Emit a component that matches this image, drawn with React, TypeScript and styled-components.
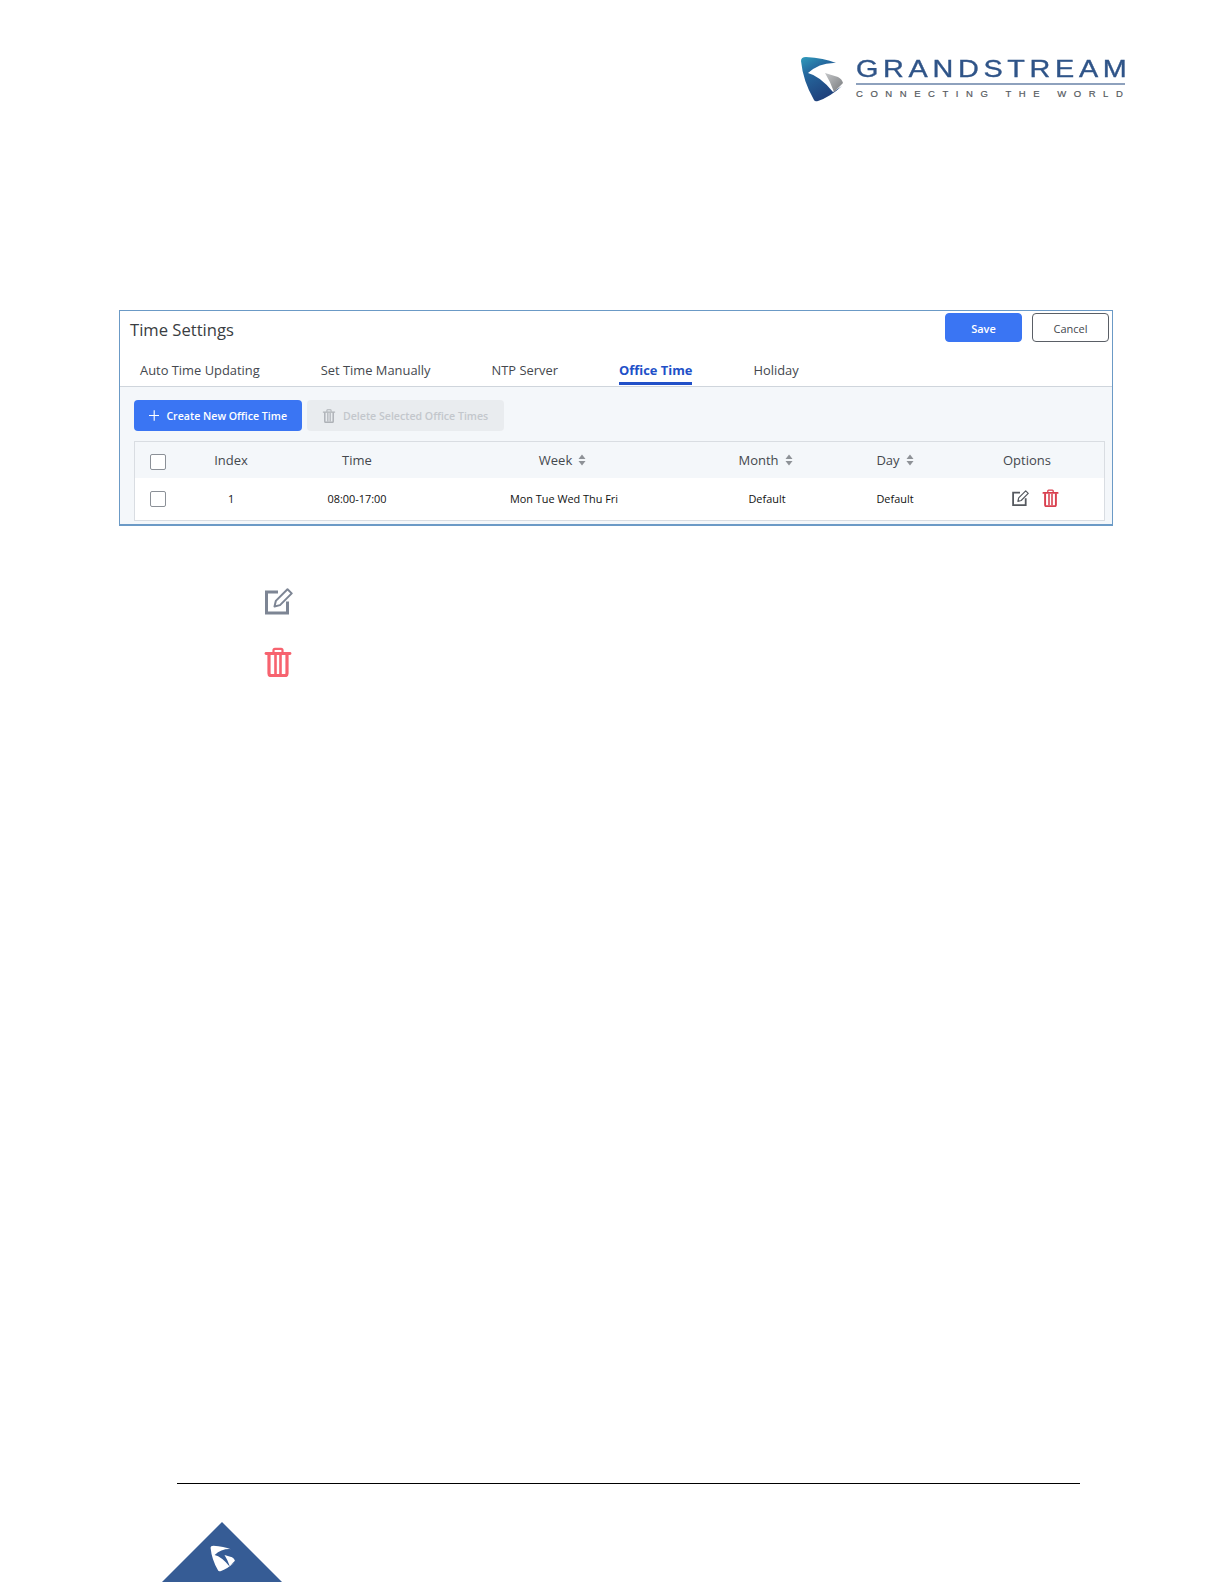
import React from "react";
import styled, { createGlobalStyle } from "styled-components";

const Global = createGlobalStyle`
  html, body { margin: 0; padding: 0; background: #fff; }
  body { font-family: "Open Sans", "Noto Sans", sans-serif; }
`;

const Page = styled.div`
  width: 1224px;
  height: 1584px;
  box-sizing: border-box;
  overflow: hidden;
  display: flex;
  flex-direction: column;
  background: #fff;
`;

const Header = styled.header`
  display: flex;
  justify-content: flex-end;
  align-items: flex-start;
  gap: 10px;
  height: 310px;
  box-sizing: border-box;
  padding: 55px 99px 0 0;
`;

const Mark = styled.svg`
  width: 46px;
  height: 48px;
  flex: none;
  filter: blur(0.4px);
`;

const Wordmark = styled.div`
  display: flex;
  flex-direction: column;
  width: 269px;
  padding-top: 1px;
`;

const BrandName = styled.div`
  font-family: "Liberation Sans", Arial, sans-serif;
  font-size: 24px;
  line-height: 25px;
  height: 25px;
  letter-spacing: 3.9px;
  color: #2f5488;
  -webkit-text-stroke: 0.35px #2f5488;
  white-space: nowrap;
  transform-origin: left center;
  transform: scaleX(1.2);
`;

const BrandRule = styled.div`
  height: 2px;
  background: #8ea1bd;
  margin-top: 2px;
`;

const Tagline = styled.div`
  font-family: "Liberation Sans", Arial, sans-serif;
  font-size: 9.5px;
  line-height: 12px;
  margin-top: 3px;
  letter-spacing: 7.55px;
  color: #565a60;
  -webkit-text-stroke: 0.2px #565a60;
  white-space: nowrap;
`;

const Panel = styled.section`
  margin-left: 119px;
  width: 994px;
  height: 216px;
  box-sizing: border-box;
  border: 1px solid #6b9ac6;
  border-bottom-width: 2px;
  display: flex;
  flex-direction: column;
  background: #fff;
`;

const TitleBar = styled.div`
  display: flex;
  align-items: flex-start;
  justify-content: space-between;
  padding: 2px 3px 0 10px;
`;

const Title = styled.h1`
  margin: 0;
  font-size: 16.6px;
  font-weight: 400;
  line-height: 34px;
  color: #3a3d42;
`;

const Actions = styled.div`
  display: flex;
  gap: 10px;
`;

const ActionButton = styled.button<{ $primary?: boolean }>`
  width: 77px;
  height: 29px;
  box-sizing: border-box;
  border-radius: 4px;
  border: 1px solid ${(p) => (p.$primary ? "#3a75f3" : "#5a5f66")};
  background: ${(p) => (p.$primary ? "#3a75f3" : "#fff")};
  color: ${(p) => (p.$primary ? "#fff" : "#44484e")};
  font: ${(p) => (p.$primary ? 600 : 400)} 11px "Open Sans", sans-serif;
  padding: 2px 0 0;
`;

const Tabs = styled.nav`
  display: flex;
  gap: 61px;
  padding: 9px 0 0 20px;
  height: 44px;
  box-sizing: border-box;
  border-bottom: 1px solid #cfd5dc;
`;

const Tab = styled.div<{ $active?: boolean }>`
  font-size: 12.9px;
  line-height: 28px;
  height: 29px;
  box-sizing: border-box;
  white-space: nowrap;
  font-weight: ${(p) => (p.$active ? 700 : 400)};
  color: ${(p) => (p.$active ? "#2150c8" : "#44484e")};
  border-bottom: ${(p) => (p.$active ? "3px solid #2150c8" : "none")};
`;

const Body = styled.div`
  flex: 1;
  background: #f4f7fa;
  padding: 13px 7px 3px 14px;
  display: flex;
  flex-direction: column;
  gap: 10px;
`;

const Toolbar = styled.div`
  display: flex;
  gap: 5px;
`;

const ToolButton = styled.button<{ $disabled?: boolean }>`
  height: 31px;
  box-sizing: border-box;
  display: flex;
  align-items: center;
  border-radius: 4px;
  border: none;
  padding: 0 15px;
  gap: 7px;
  font: 600 10.6px "Open Sans", sans-serif;
  white-space: nowrap;
  background: ${(p) => (p.$disabled ? "#e9ecef" : "#3a75f3")};
  color: ${(p) => (p.$disabled ? "#c3c7cc" : "#fff")};
  width: ${(p) => (p.$disabled ? "197px" : "168px")};
`;

const Table = styled.div`
  border: 1px solid #d9dde2;
  background: #fff;
  display: flex;
  flex-direction: column;
`;

const Row = styled.div<{ $head?: boolean }>`
  display: grid;
  grid-template-columns: 55px 82px 170px 244px 162px 94px 162px;
  align-items: center;
  height: ${(p) => (p.$head ? "36px" : "42px")};
  background: ${(p) => (p.$head ? "#f4f7fa" : "#fff")};
`;

const HeadCell = styled.div<{ $sort?: boolean; $shift?: number }>`
  display: flex;
  justify-content: center;
  align-items: center;
  gap: 6px;
  font-size: 13px;
  color: #44484e;
  padding-right: ${(p) => (p.$sort ? "3px" : "0")};
  padding-left: ${(p) => (p.$shift ? `${p.$shift}px` : "0")};
`;

const Cell = styled.div`
  display: flex;
  justify-content: center;
  align-items: center;
  padding-bottom: 2px;
  font-size: 10.9px;
  font-weight: 500;
  color: #111;
  white-space: nowrap;
`;

const OptionsCell = styled.div`
  display: flex;
  justify-content: center;
  align-items: center;
  gap: 13px;
  padding: 0 0 3px 24px;
`;

const CheckCell = styled.div<{ $head?: boolean }>`
  padding: ${(p) => (p.$head ? "3px" : "0")} 0 0 15px;
  display: flex;
`;

const Check = styled.span`
  width: 16px;
  height: 16px;
  box-sizing: border-box;
  border: 1px solid #8b9097;
  border-radius: 2px;
  background: #fff;
`;

const Legend = styled.div`
  display: flex;
  flex-direction: column;
  align-items: flex-start;
  gap: 31px;
  padding: 60px 0 0 263px;
`;

const LegendIcon = styled.svg`
  width: 30px;
  height: 30px;
  display: block;
  filter: blur(0.5px);
`;

const Footer = styled.footer`
  margin-top: auto;
  padding-bottom: 2px;
  display: flex;
  flex-direction: column;
  align-items: flex-start;
`;

const FootRule = styled.div`
  margin-left: 177px;
  width: 903px;
  height: 1px;
  background: #000;
`;

const FootMark = styled.svg`
  margin: 38px 0 0 162px;
  width: 120px;
  height: 60px;
  display: block;
`;

const Sort = () => (
  <svg width="8" height="12" viewBox="0 0 8 12">
    <path d="M4 .5 7.500 5H.500zM4 11.500.500 7h7z" fill="#8e9297" />
  </svg>
);

const SWOOSH = "M1 6Q1 2 6 2Q24 3 36 8Q20 7 8 18Q20 21 33 37L42 31Q30 42 18 46Q15 47 14 45Q3 26 1 6Z";
const WING = "M25 18L38 22Q42 24 43 28L34 37Q30 26 25 18Z";

const EditShape = ({ color }: { color: string }) => (
  <>
    <path d="M15 6H3.500v21h21V15.500" stroke={color} strokeWidth="3" fill="none" />
    <path d="M11.500 20.500l1.300-5.600L24.500 3.200l4.200 4.200L17 19.100z" stroke={color} strokeWidth="2" strokeLinejoin="round" fill="none" />
  </>
);

const TrashShape = ({ color }: { color: string }) => (
  <>
    <path d="M2 6.500h24" stroke={color} strokeWidth="2.800" strokeLinecap="round" />
    <path d="M9.500 6V3.200q0-1.400 1.400-1.400h6.200q1.400 0 1.400 1.400V6" stroke={color} strokeWidth="2.200" fill="none" />
    <path d="M5 7v19.600q0 2 2 2h14q2 0 2-2V7" stroke={color} strokeWidth="3.200" fill="none" />
    <path d="M11.500 8v19M16.500 8v19" stroke={color} strokeWidth="2.600" />
  </>
);

export default function App() {
  return (
    <Page>
      <Global />
      <Header>
        <Mark viewBox="0 0 46 48">
          <defs>
            <linearGradient id="gs" x1="0" y1="0" x2="0.5" y2="1">
              <stop offset="0" stopColor="#2f9cbc" />
              <stop offset="0.35" stopColor="#25689e" />
              <stop offset="1" stopColor="#1f3f7a" />
            </linearGradient>
            <linearGradient id="gw" x1="0" y1="0" x2="1" y2="1">
              <stop offset="0" stopColor="#c4c6c8" />
              <stop offset="1" stopColor="#77797c" />
            </linearGradient>
          </defs>
          <path d={SWOOSH} fill="url(#gs)" />
          <path d={WING} fill="url(#gw)" />
        </Mark>
        <Wordmark>
          <BrandName>GRANDSTREAM</BrandName>
          <BrandRule />
          <Tagline>CONNECTING THE WORLD</Tagline>
        </Wordmark>
      </Header>
      <Panel>
        <TitleBar>
          <Title>Time Settings</Title>
          <Actions>
            <ActionButton $primary>Save</ActionButton>
            <ActionButton>Cancel</ActionButton>
          </Actions>
        </TitleBar>
        <Tabs>
          <Tab>Auto Time Updating</Tab>
          <Tab>Set Time Manually</Tab>
          <Tab>NTP Server</Tab>
          <Tab $active>Office Time</Tab>
          <Tab>Holiday</Tab>
        </Tabs>
        <Body>
          <Toolbar>
            <ToolButton>
              <svg width="11" height="11" viewBox="0 0 11 11">
                <path d="M5.500 0v11M0 5.500h11" stroke="#fff" strokeWidth="1.200" />
              </svg>
              Create New Office Time
            </ToolButton>
            <ToolButton $disabled>
              <svg width="14" height="14" viewBox="0 0 28 30">
                <TrashShape color="#aeb2b7" />
              </svg>
              Delete Selected Office Times
            </ToolButton>
          </Toolbar>
          <Table>
            <Row $head>
              <CheckCell $head><Check /></CheckCell>
              <HeadCell>Index</HeadCell>
              <HeadCell>Time</HeadCell>
              <HeadCell $sort>Week <Sort /></HeadCell>
              <HeadCell $sort>Month <Sort /></HeadCell>
              <HeadCell>Day <Sort /></HeadCell>
              <HeadCell $shift={8}>Options</HeadCell>
            </Row>
            <Row>
              <CheckCell><Check /></CheckCell>
              <Cell>1</Cell>
              <Cell>08:00-17:00</Cell>
              <Cell>Mon Tue Wed Thu Fri</Cell>
              <Cell>Default</Cell>
              <Cell>Default</Cell>
              <OptionsCell>
                <svg width="18" height="18" viewBox="0 0 30 30">
                  <EditShape color="#55595f" />
                </svg>
                <svg width="17" height="18" viewBox="0 0 28 30">
                  <TrashShape color="#d9404f" />
                </svg>
              </OptionsCell>
            </Row>
          </Table>
        </Body>
      </Panel>
      <Legend>
        <LegendIcon viewBox="0 0 30 30">
          <EditShape color="#7d8594" />
        </LegendIcon>
        <LegendIcon viewBox="0 0 28 30">
          <TrashShape color="#f7636f" />
        </LegendIcon>
      </Legend>
      <Footer>
        <FootRule />
        <FootMark viewBox="0 0 120 60">
          <path d="M60 0L120 60H0Z" fill="#365c95" />
          <g transform="translate(48 22.500) scale(.58)" fill="#fff">
            <path d={SWOOSH} />
            <path d={WING} />
          </g>
        </FootMark>
      </Footer>
    </Page>
  );
}
